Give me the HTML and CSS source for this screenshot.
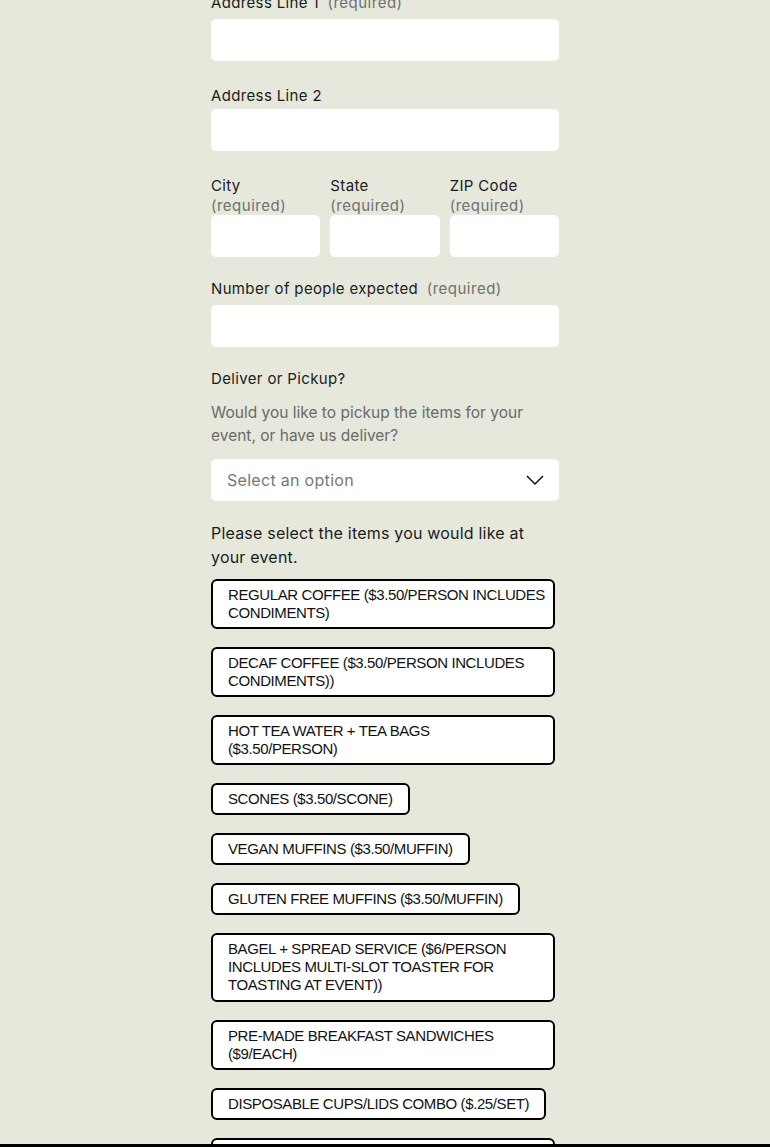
FILE: index.html
```html
<!DOCTYPE html>
<html lang="en">
<head>
<meta charset="utf-8">
<title>Catering Order</title>
<link rel="stylesheet" href="styles.css">
</head>
<body>
<main class="page">
  <form class="form">
    <div class="field wide">
      <label class="label has-req">Address Line 1 <span class="req">(required)</span></label>
      <div class="input"></div>
    </div>
    <div class="field wide">
      <label class="label">Address Line 2</label>
      <div class="input"></div>
    </div>
    <div class="row">
      <div class="col">
        <label class="label stacked">City<span class="req">(required)</span></label>
        <div class="input"></div>
      </div>
      <div class="col">
        <label class="label stacked">State<span class="req">(required)</span></label>
        <div class="input"></div>
      </div>
      <div class="col">
        <label class="label stacked">ZIP Code<span class="req">(required)</span></label>
        <div class="input"></div>
      </div>
    </div>
    <div class="field">
      <label class="label has-req">Number of people expected <span class="req">(required)</span></label>
      <div class="input"></div>
    </div>
    <div class="field">
      <label class="label">Deliver or Pickup?</label>
      <p class="desc">Would you like to pickup the items for your event, or have us deliver?</p>
      <div class="input select">
        <span class="placeholder">Select an option</span>
        <svg class="chev" width="18" height="12" viewBox="0 0 18 12"><path d="M1 2 L9 10 L17 2" fill="none" stroke="#111" stroke-width="1.5"/></svg>
      </div>
    </div>
    <div class="items">
      <p class="items-title">Please select the items you would like at your event.</p>
      <div class="chip chip-wide">Regular Coffee ($3.50/person includes condiments)</div>
      <div class="chip chip-wide">Decaf Coffee ($3.50/person includes condiments))</div>
      <div class="chip chip-wide">Hot Tea Water + Tea Bags<br>($3.50/person)</div>
      <div class="chip">Scones ($3.50/scone)</div>
      <div class="chip">Vegan Muffins ($3.50/muffin)</div>
      <div class="chip">Gluten Free Muffins ($3.50/muffin)</div>
      <div class="chip chip-wide chip-three">Bagel + Spread Service ($6/person includes multi-slot toaster for toasting at event))</div>
      <div class="chip chip-wide">Pre-made Breakfast Sandwiches ($9/each)</div>
      <div class="chip">Disposable cups/lids combo ($.25/set)</div>
      <div class="chip chip-wide chip-empty"></div>
    </div>
  </form>
</main>
<div class="bottom-bar"></div>
</body>
</html>
```

FILE: styles.css
```css
* { box-sizing: border-box; }
html, body { margin: 0; padding: 0; }
body {
  background: #e5e8db;
  font-family: Inter, "Noto Sans", "DejaVu Sans", sans-serif;
  color: #1b1b1b;
  overflow: hidden;
}
.page {
  width: 348px;
  margin: 0 auto;
}
.form {
  margin-top: -7px;
  display: flex;
  flex-direction: column;
}
.field { margin-bottom: 22px; }
.field.wide { margin-bottom: 25px; }
.label {
  display: block;
  font-size: 15px;
  line-height: 20px;
  margin-bottom: 3px;
  letter-spacing: 0.35px;
}
.label.has-req { margin-bottom: 6px; }
.req {
  color: #707070;
  margin-left: 4px;
  font-size: 15px;
  letter-spacing: 0.5px;
}
.label.stacked .req {
  display: block;
  margin-left: 0;
}
.input {
  height: 42px;
  background: #fff;
  border-radius: 5px;
}
.row {
  display: grid;
  grid-template-columns: 1fr 1fr 1fr;
  column-gap: 10px;
  margin-bottom: 22px;
}
.row .label { margin-bottom: -1px; }
.desc {
  margin: 12px 0 12px;
  font-size: 15.5px;
  line-height: 23px;
  color: #6a6a6a;
}
.select {
  display: flex;
  align-items: center;
  justify-content: space-between;
  padding: 0 15px 0 16px;
}
.placeholder {
  font-size: 16px;
  letter-spacing: 0.3px;
  color: #777;
}
.chev { display: block; }
.items {
  margin-top: -2px;
  display: flex;
  flex-direction: column;
  align-items: flex-start;
  gap: 18px;
}
.items-title {
  margin: 0 0 -8px;
  font-size: 16px;
  letter-spacing: 0.2px;
  line-height: 24px;
  color: #1b1b1b;
}
.chip {
  max-width: 344px;
  border: 2px solid #000;
  border-radius: 6px;
  background: #fff;
  padding: 5px 15px;
  font-family: "Liberation Sans", Arial, sans-serif;
  font-size: 15px;
  letter-spacing: -0.4px;
  line-height: 18px;
  text-transform: uppercase;
  color: #111;
}
.chip-wide {
  width: 344px;
  padding-right: 5px;
}
.chip-three { padding-bottom: 6px; }
.chip-empty {
  height: 50px;
}
.bottom-bar {
  position: fixed;
  left: 0;
  right: 0;
  bottom: 0;
  height: 3px;
  background: #000;
}
```
